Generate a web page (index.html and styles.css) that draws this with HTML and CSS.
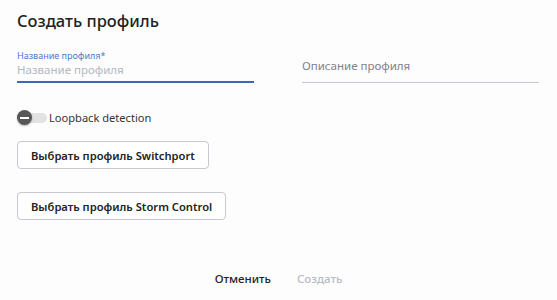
FILE: index.html
```html
<!DOCTYPE html>
<html lang="ru">
<head>
    <meta charset="UTF-8">
    <title>Создать профиль</title>
    <link rel="stylesheet" href="styles.css">
</head>
<body>
    <div class="dialog">
        <h1 class="title">Создать профиль</h1>
        <div class="fields">
            <div class="field field-active">
                <label class="field-label">Название профиля*</label>
                <input class="field-input" type="text" placeholder="Название профиля">
            </div>
            <div class="field field-empty">
                <input class="field-input" type="text" placeholder="Описание профиля">
            </div>
        </div>
        <div class="toggle-row">
            <span class="toggle">
                <span class="toggle-track"></span>
                <span class="toggle-knob"></span>
            </span>
            <span class="toggle-label">Loopback detection</span>
        </div>
        <button class="btn-outline">Выбрать профиль Switchport</button>
        <button class="btn-outline">Выбрать профиль Storm Control</button>
        <div class="actions">
            <button class="btn-text">Отменить</button>
            <button class="btn-text btn-disabled">Создать</button>
        </div>
    </div>
</body>
</html>
```

FILE: styles.css
```css
body {
    margin: 0;
    background-color: #fdfdfd;
    font-family: "Noto Sans", "Open Sans", sans-serif;
    color: #222;
}
.dialog {
    padding: 8px 17px 0 17px;
}
.title {
    font-size: 16.5px;
    font-weight: 500;
    margin: 0;
    line-height: 26px;
    color: #222;
}
.fields {
    display: flex;
    gap: 48px;
    margin-top: 16px;
}
.field {
    width: 237px;
    display: flex;
    flex-direction: column;
    justify-content: flex-end;
    border-bottom: 1px solid #c8c8d0;
}
.field-active {
    border-bottom: 2px solid #3a67c0;
}
.field-label {
    font-size: 9px;
    line-height: 12px;
    color: #4a7bd0;
}
.field-input {
    border: none;
    background: transparent;
    font-family: inherit;
    font-size: 11.5px;
    line-height: 16px;
    padding: 0 0 3px 0;
    outline: none;
}
.field-empty .field-input {
    padding-bottom: 8px;
}
.field-input::placeholder {
    color: #7e828c;
}
.field-active .field-input::placeholder {
    color: #b4b8c0;
}
.toggle-row {
    display: flex;
    align-items: center;
    margin-top: 27px;
    height: 15px;
}
.toggle {
    position: relative;
    width: 30px;
    height: 15px;
}
.toggle-track {
    position: absolute;
    left: 3px;
    top: 2.5px;
    width: 27px;
    height: 10px;
    border-radius: 5px;
    background-color: #e2e2e2;
}
.toggle-knob {
    position: absolute;
    left: 0;
    top: 0;
    width: 15px;
    height: 15px;
    border-radius: 50%;
    background-color: #575757;
    box-shadow: 0 1px 2px rgba(0, 0, 0, 0.3);
}
.toggle-knob::after {
    content: "";
    position: absolute;
    left: 3px;
    right: 3px;
    top: 7px;
    height: 1.5px;
    background-color: #fff;
}
.toggle-label {
    margin-left: 2px;
    font-size: 11.1px;
    color: #333;
}
.btn-outline {
    display: block;
    height: 28px;
    padding: 0 13px;
    border: 1px solid #c8c8d0;
    border-radius: 4px;
    background: #fff;
    font-family: inherit;
    font-size: 11.2px;
    font-weight: 600;
    color: #222;
    margin-top: 16px;
}
.btn-outline + .btn-outline {
    margin-top: 23px;
}
.actions {
    display: flex;
    justify-content: center;
    gap: 26px;
    margin-top: 51px;
}
.btn-text {
    border: none;
    background: none;
    padding: 0;
    font-family: inherit;
    font-size: 11.5px;
    line-height: 16px;
    font-weight: 500;
    color: #222;
}
.btn-disabled {
    color: #b8bcc4;
}
```
